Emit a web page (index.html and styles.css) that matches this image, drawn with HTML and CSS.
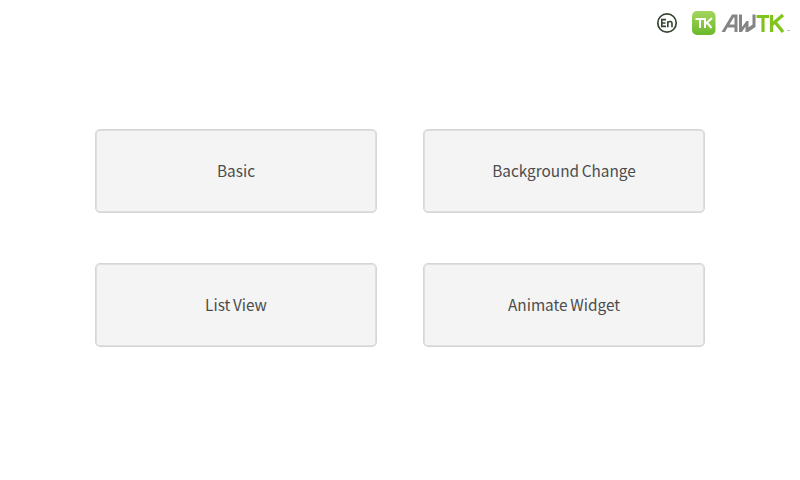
FILE: index.html
```html
<!DOCTYPE html>
<html lang="en">
<head>
<meta charset="utf-8">
<title>AWTK Demo</title>
<link rel="stylesheet" href="styles.css">
</head>
<body>
<header class="topbar">
  <svg class="lang" viewBox="0 0 22 22" width="22" height="22"><circle cx="11" cy="11" r="9.2" fill="none" stroke="#36452f" stroke-width="1.7"/><path d="M10 7.600H5.800V14.400H10M5.800 11H9.500M11.800 15.200V9.200M11.800 11.500C11.800 9.200 16 8.600 16 11.500V15.200" fill="none" stroke="#36452f" stroke-width="1.6"/></svg>
  <svg class="logo" viewBox="0 0 100 26" width="100" height="26">
    <defs><linearGradient id="g" x1="0" y1="0" x2="0" y2="1"><stop offset="0" stop-color="#a4d65e"/><stop offset="1" stop-color="#6bb82a"/></linearGradient></defs>
    <rect x="0" y="1" width="23.5" height="24" rx="5" fill="url(#g)"/>
    <path d="M3.500 9H12M8 9V18M13 8V18M20 8L13.500 14M15 12.500L19.500 18" fill="none" stroke="#fff" stroke-width="2"/>
    <path d="M29.500 22L40 4.500H45.500V22H42.500V17.500H35.500L33 22ZM37.500 14.500H42.500V7.500H41.700Z" fill="#858585" fill-rule="evenodd"/>
    <path d="M47 4.500H50V17L54.500 11H56.500V17.500L60.500 14.500V4.500H63.500V17L56 22H53.500V16.500L50 22H47Z" fill="#858585"/>
    <path d="M64.500 6.500H77M71 6.500V22M79.500 5V22M91 5L80 14.500M83 12L91 22" fill="none" stroke="#80c31c" stroke-width="3.200"/>
    <path d="M95 20.500H98" stroke="#bbb" stroke-width="1"/>
  </svg>
</header>
<main class="grid">
  <button class="tile">Basic</button>
  <button class="tile">Background Change</button>
  <button class="tile">List View</button>
  <button class="tile">Animate Widget</button>
</main>
</body>
</html>
```
FILE: styles.css
```css
body { margin: 0; width: 800px; height: 480px; overflow: hidden; background: #fff; font-family: "Noto Sans CJK SC", sans-serif; }
.topbar { display: flex; justify-content: flex-end; align-items: center; gap: 14px; height: 46px; padding-right: 8px; box-sizing: border-box; }
.grid { display: grid; grid-template-columns: 282px 282px; grid-auto-rows: 84px; gap: 50px 46px; padding: 83px 95px 0; }
.tile { box-sizing: border-box; padding: 0 0 3px; border: 1px solid #d6d6d6; box-shadow: inset 0 0 0 1px #dfdfdf; border-radius: 5px; background: #f4f4f4; color: #4c4c4c; font: 15.35px "Noto Sans CJK SC", sans-serif; word-spacing: -0.7px; }
```
